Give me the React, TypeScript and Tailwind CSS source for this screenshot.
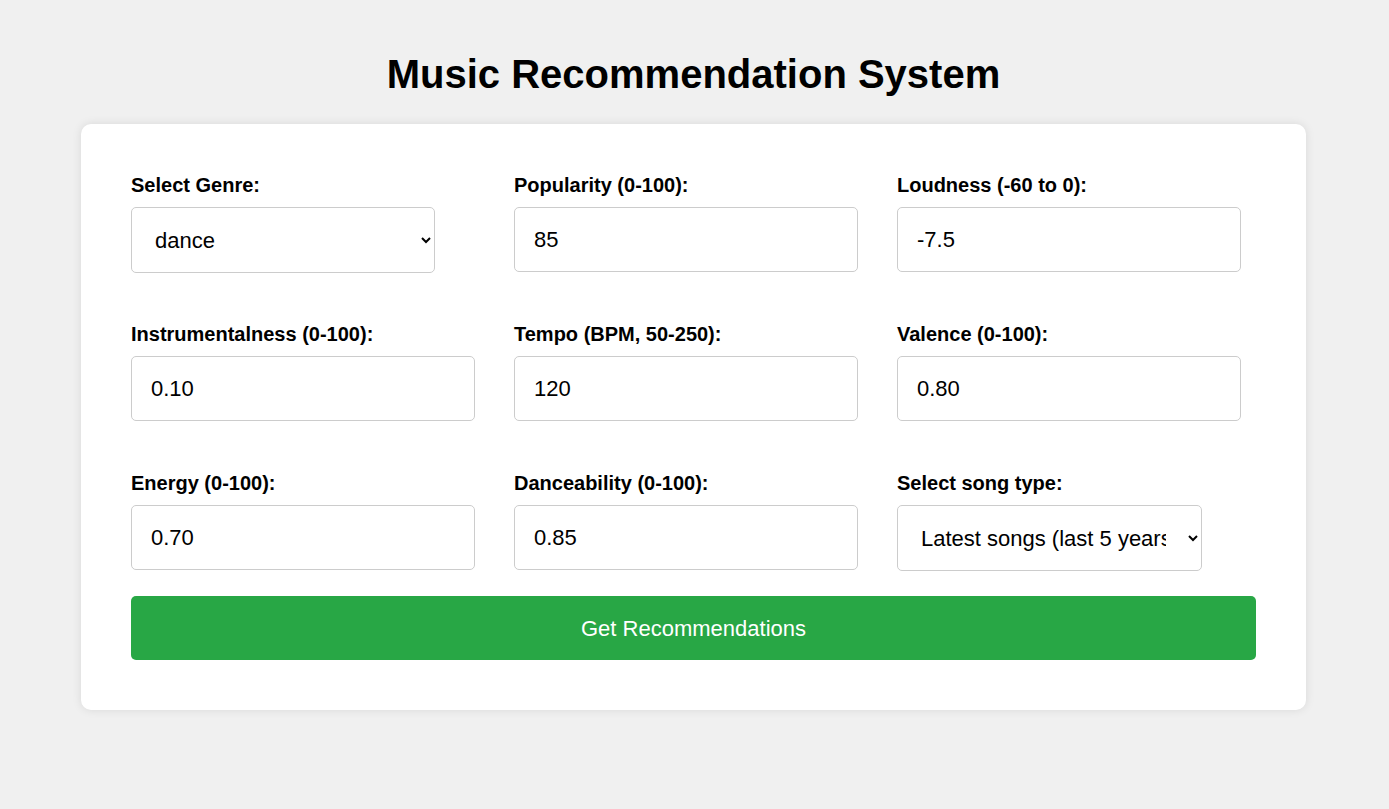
import { useState } from "react";

/* ── Form fields ─────────────────────────────────────────── */
const FIELDS: { id: string; label: string; kind: "input" | "select"; value: string; options?: string[]; width?: string }[] = [
  { id: "genre",      label: "Select Genre:",              kind: "select", value: "dance", options: ["pop", "rock", "dance", "hip-hop", "jazz"], width: "w-[304px]" },
  { id: "popularity", label: "Popularity (0-100):",        kind: "input",  value: "85" },
  { id: "loudness",   label: "Loudness (-60 to 0):",       kind: "input",  value: "-7.5" },
  { id: "instr",      label: "Instrumentalness (0-100):",  kind: "input",  value: "0.10" },
  { id: "tempo",      label: "Tempo (BPM, 50-250):",       kind: "input",  value: "120" },
  { id: "valence",    label: "Valence (0-100):",           kind: "input",  value: "0.80" },
  { id: "energy",     label: "Energy (0-100):",            kind: "input",  value: "0.70" },
  { id: "dance",      label: "Danceability (0-100):",      kind: "input",  value: "0.85" },
  { id: "songtype",   label: "Select song type:",          kind: "select", value: "Latest songs (last 5 years)", options: ["Latest songs (last 5 years)", "All time songs"], width: "w-[305px]" },
];

export default function App() {
  const [values, setValues] = useState<Record<string, string>>(
    Object.fromEntries(FIELDS.map((f) => [f.id, f.value]))
  );
  const set = (id: string, v: string) => setValues((prev) => ({ ...prev, [id]: v }));

  return (
    <div className="min-h-[809px] bg-[#f0f0f0] pt-[51px] text-black font-['Liberation_Sans',Arial,sans-serif]">
      <h1 className="text-center text-[40px] leading-[46px] font-bold mb-[27px] pr-[2px]">Music Recommendation System</h1>

      <div className="w-[1225px] ml-[81px] bg-white rounded-[10px] shadow-[0_0_10px_rgba(0,0,0,0.1)] p-[50px]">
        <div className="grid grid-cols-[344px_344px_344px] gap-x-[39px] gap-y-[50px]">
          {FIELDS.map((f) => (
            <div key={f.id} className="flex flex-col h-[99px]">
              <label className="text-[20px] leading-[23px] font-bold mb-[10px]">{f.label}</label>
              {f.kind === "select" ? (
                <select
                  value={values[f.id]}
                  onChange={(e) => set(f.id, e.target.value)}
                  className={`${f.width} h-[66px] px-[19px] text-[22px] border border-[#ccc] rounded-[5px] bg-white outline-none`}
                >
                  {f.options!.map((o) => (
                    <option key={o} value={o}>{o}</option>
                  ))}
                </select>
              ) : (
                <input
                  value={values[f.id]}
                  onChange={(e) => set(f.id, e.target.value)}
                  className="w-[344px] h-[65px] px-[19px] text-[22px] border border-[#ccc] rounded-[5px] bg-white outline-none"
                />
              )}
            </div>
          ))}
        </div>

        <button className="mt-[25px] w-full h-[64px] bg-[#28a745] text-white text-[22px] rounded-[5px] hover:bg-[#218838] transition-colors">
          Get Recommendations
        </button>
      </div>
    </div>
  );
}
